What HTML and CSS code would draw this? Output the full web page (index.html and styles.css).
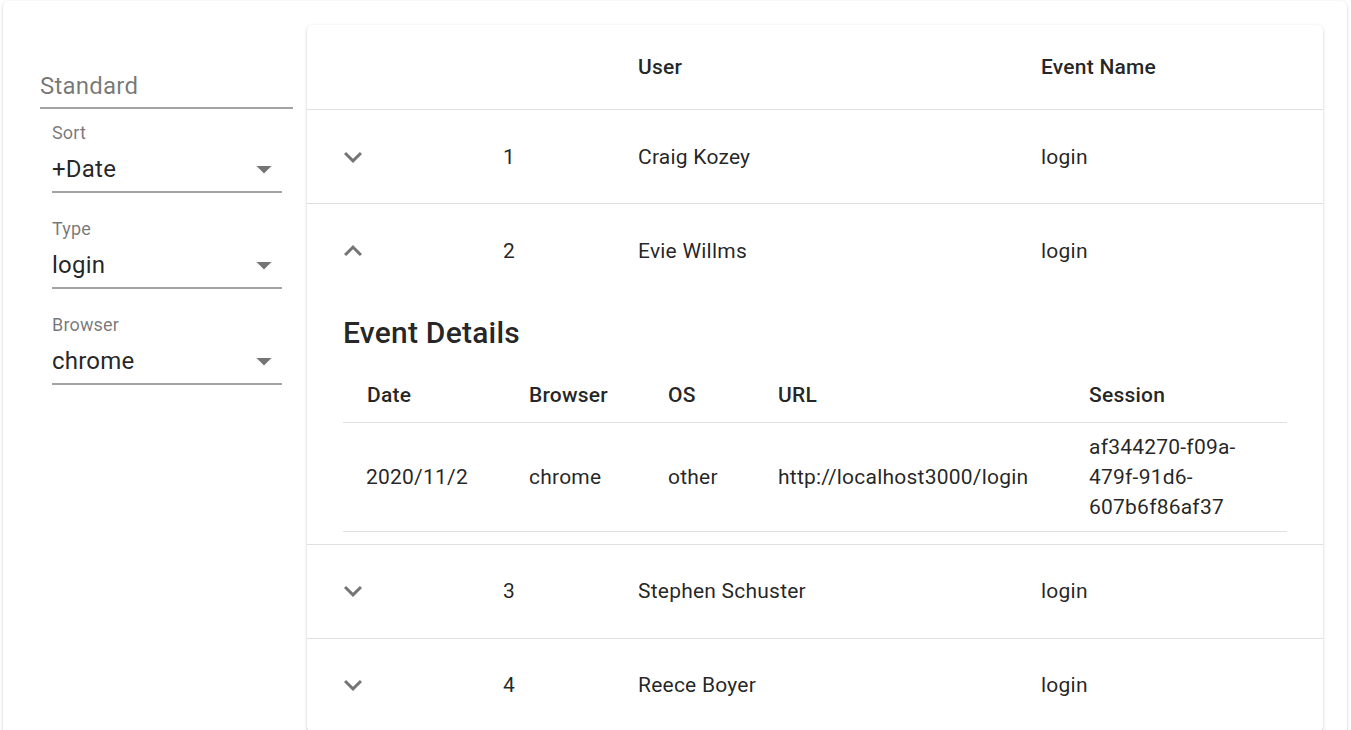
FILE: index.html
```html
<!DOCTYPE html>
<html lang="en">
<head>
<meta charset="utf-8">
<title>Events</title>
<link rel="stylesheet" href="styles.css">
</head>
<body>
<div class="page">
  <div class="paper outer">
    <aside class="sidebar">
      <div class="std"><span>Standard</span></div>
      <div class="sel">
        <div class="sel-label">Sort</div>
        <div class="sel-input"><span>+Date</span><svg class="arrow" viewBox="0 0 24 24"><path d="M7 10l5 5 5-5z"/></svg></div>
      </div>
      <div class="sel">
        <div class="sel-label">Type</div>
        <div class="sel-input"><span>login</span><svg class="arrow" viewBox="0 0 24 24"><path d="M7 10l5 5 5-5z"/></svg></div>
      </div>
      <div class="sel">
        <div class="sel-label">Browser</div>
        <div class="sel-input"><span>chrome</span><svg class="arrow" viewBox="0 0 24 24"><path d="M7 10l5 5 5-5z"/></svg></div>
      </div>
    </aside>
    <div class="paper tablecard">
      <table class="main">
        <colgroup><col class="c1"><col class="c2"><col class="c3"><col class="c4"></colgroup>
        <thead>
          <tr><th></th><th></th><th>User</th><th>Event Name</th></tr>
        </thead>
        <tbody>
          <tr>
            <td><span class="iconbtn"><svg viewBox="0 0 24 24"><path d="M16.59 8.59L12 13.170 7.41 8.59 6 10l6 6 6-6z"/></svg></span></td>
            <td>1</td><td>Craig Kozey</td><td>login</td>
          </tr>
          <tr class="open">
            <td><span class="iconbtn"><svg viewBox="0 0 24 24"><path d="M12 8l-6 6 1.41 1.41L12 10.83l4.59 4.58L18 14z"/></svg></span></td>
            <td>2</td><td>Evie Willms</td><td>login</td>
          </tr>
          <tr class="detail">
            <td colspan="4">
              <div class="box">
                <h6 class="title">Event Details</h6>
                <table class="inner">
                  <colgroup><col class="d1"><col class="d2"><col class="d3"><col class="d4"><col class="d5"></colgroup>
                  <thead>
                    <tr><th>Date</th><th>Browser</th><th>OS</th><th>URL</th><th>Session</th></tr>
                  </thead>
                  <tbody>
                    <tr><td>2020/11/2</td><td>chrome</td><td>other</td><td>http://localhost3000/login</td><td>af344270-f09a-479f-91d6-607b6f86af37</td></tr>
                  </tbody>
                </table>
              </div>
            </td>
          </tr>
          <tr>
            <td><span class="iconbtn"><svg viewBox="0 0 24 24"><path d="M16.59 8.59L12 13.17 7.41 8.59 6 10l6 6 6-6z"/></svg></span></td>
            <td>3</td><td>Stephen Schuster</td><td>login</td>
          </tr>
          <tr>
            <td><span class="iconbtn"><svg viewBox="0 0 24 24"><path d="M16.59 8.59L12 13.17 7.41 8.59 6 10l6 6 6-6z"/></svg></span></td>
            <td>4</td><td>Reece Boyer</td><td>login</td>
          </tr>
        </tbody>
      </table>
    </div>
  </div>
</div>
</body>
</html>
```
FILE: styles.css
```css
* { box-sizing: border-box; }
html, body { margin: 0; padding: 0; background: #fff; }
body {
  font-family: Roboto, "Liberation Sans", Arial, sans-serif;
  color: rgba(0,0,0,0.87);
  overflow: hidden;
}
.page { padding: 1px 4px 0 3px; }
.paper {
  background: #fff;
  border-radius: 6px;
  box-shadow: 0 3px 1.5px -1.5px rgba(0,0,0,0.2), 0 1.5px 1.5px 0 rgba(0,0,0,0.14), 0 1.5px 4.5px 0 rgba(0,0,0,0.12);
}
.outer {
  display: flex;
  align-items: flex-start;
  padding: 24px 24px 0 0;
  min-height: 800px;
}
.sidebar { width: 304px; flex: none; margin-top: -24px; }
.std {
  margin: 71px 0 0 37px;
  width: 253px;
  font-size: 24px;
  line-height: 28px;
  letter-spacing: 0.00938em;
  color: rgba(0,0,0,0.54);
  padding-bottom: 7px;
  border-bottom: 2px solid rgba(0,0,0,0.36);
}
.sel { margin: 27px 0 0 49px; width: 230px; }
.std + .sel { margin-top: 15px; }
.sel-label {
  font-size: 18px;
  line-height: 18px;
  color: rgba(0,0,0,0.54);
  letter-spacing: 0.00938em;
}
.sel-input {
  margin-top: 13px;
  display: flex;
  align-items: center;
  justify-content: space-between;
  font-size: 24px;
  line-height: 28px;
  letter-spacing: 0.00938em;
  padding-bottom: 8px;
  border-bottom: 2px solid rgba(0,0,0,0.36);
}
.arrow { width: 36px; height: 36px; margin: -4px 0; fill: rgba(0,0,0,0.54); flex: none; }

.tablecard { width: 1016px; flex: none; overflow: hidden; }
table { border-collapse: collapse; table-layout: fixed; }
.main { width: 1016px; }
.c1 { width: 172px; } .c2 { width: 135px; } .c3 { width: 403px; } .c4 { width: 306px; }
.main th, .main td {
  text-align: left;
  padding: 24px;
  font-size: 21px;
  letter-spacing: 0.01071em;
  border-bottom: 1px solid #e0e0e0;
  vertical-align: middle;
}
.main th { font-weight: 500; line-height: 36px; }
.main td { font-weight: 400; line-height: 30px; }
.main td:first-child { padding-left: 23px; }
.main tr.open td { border-bottom: none; }
.iconbtn {
  display: block;
  width: 45px;
  height: 45px;
  padding: 4.5px;
}
.iconbtn svg { display: block; width: 36px; height: 36px; fill: rgba(0,0,0,0.54); }
.main tr.detail > td { padding: 0 24px; }
.box { margin: 12px; }
.title {
  margin: 0 0 10.5px;
  font-size: 30px;
  line-height: 48px;
  font-weight: 500;
  letter-spacing: 0.0075em;
}
.inner { width: 944px; }
.d1 { width: 162px; } .d2 { width: 139px; } .d3 { width: 110px; } .d4 { width: 311px; } .d5 { width: 222px; }
.inner th, .inner td {
  text-align: left;
  padding: 9px 36px 9px 24px;
  font-size: 21px;
  letter-spacing: 0.01071em;
  border-bottom: 1px solid #e0e0e0;
  vertical-align: middle;
}
.inner th { font-weight: 500; line-height: 36px; }
.inner td { font-weight: 400; line-height: 30px; }
```
